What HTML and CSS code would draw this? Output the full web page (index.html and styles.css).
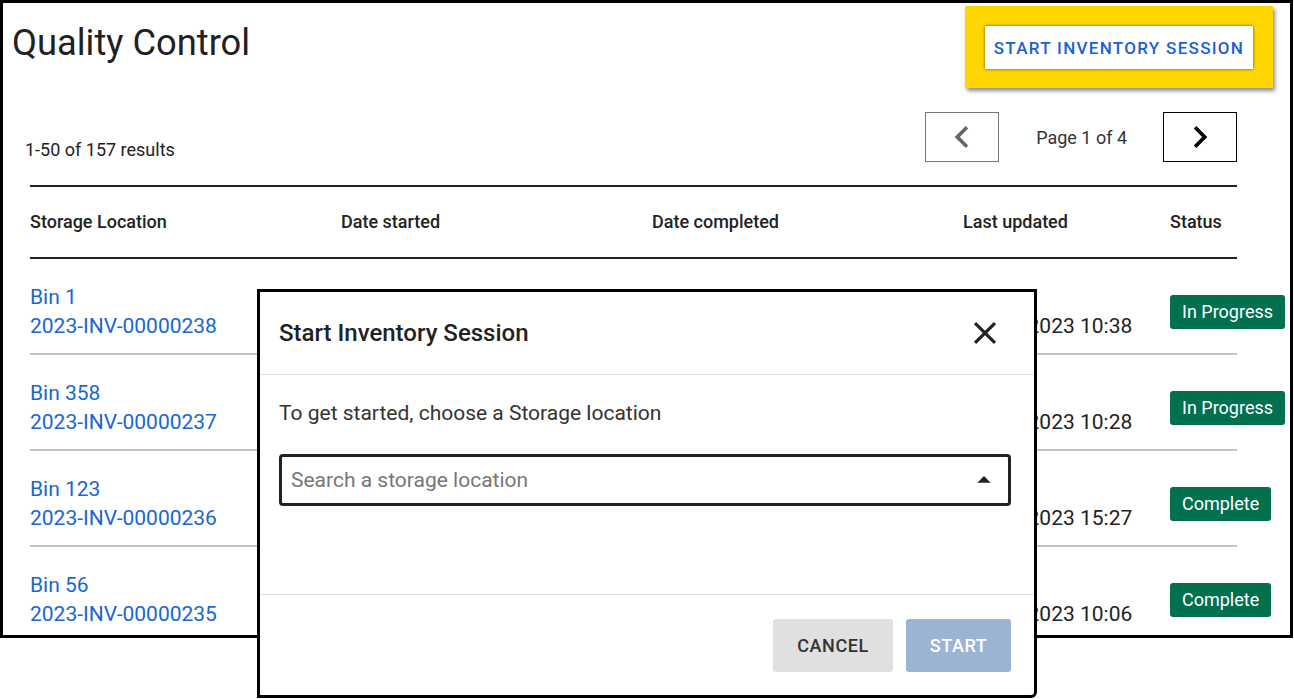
FILE: index.html
```html
<!DOCTYPE html>
<html lang="en">
<head>
    <meta charset="UTF-8">
    <title>Quality Control</title>
    <link rel="stylesheet" href="styles.css">
</head>
<body>
    <div class="frame">
        <div class="top">
            <h1 class="page-title">Quality Control</h1>
            <div class="highlight">
                <button class="start-session">START INVENTORY SESSION</button>
            </div>
        </div>

        <div class="pager-row">
            <span class="results">1-50 of 157 results</span>
            <div class="pager">
                <button class="page-btn prev" aria-label="Previous page">
                    <svg width="44" height="44" viewBox="0 0 24 24"><path d="M15.41 7.41L14 6l-6 6 6 6 1.41-1.41L10.83 12z" fill="#666"/></svg>
                </button>
                <span class="page-label">Page 1 of 4</span>
                <button class="page-btn next" aria-label="Next page">
                    <svg width="44" height="44" viewBox="0 0 24 24"><path d="M8.59 16.59L10 18l6-6-6-6-1.41 1.41L13.17 12z" fill="#000"/></svg>
                </button>
            </div>
        </div>

        <div class="table">
            <div class="thead">
                <div>Storage Location</div>
                <div>Date started</div>
                <div>Date completed</div>
                <div>Last updated</div>
                <div>Status</div>
            </div>
            <!-- started / completed cells are covered by the dialog -->
            <div class="trow">
                <div class="loc"><a href="#">Bin 1</a><a href="#">2023-INV-00000238</a></div>
                <div class="date"></div>
                <div class="date"></div>
                <div class="date">04/21/2023 10:38</div>
                <div class="status"><span class="badge">In Progress</span></div>
            </div>
            <div class="trow">
                <div class="loc"><a href="#">Bin 358</a><a href="#">2023-INV-00000237</a></div>
                <div class="date"></div>
                <div class="date"></div>
                <div class="date">04/21/2023 10:28</div>
                <div class="status"><span class="badge">In Progress</span></div>
            </div>
            <div class="trow">
                <div class="loc"><a href="#">Bin 123</a><a href="#">2023-INV-00000236</a></div>
                <div class="date"></div>
                <div class="date"></div>
                <div class="date">04/20/2023 15:27</div>
                <div class="status"><span class="badge">Complete</span></div>
            </div>
            <div class="trow">
                <div class="loc"><a href="#">Bin 56</a><a href="#">2023-INV-00000235</a></div>
                <div class="date"></div>
                <div class="date"></div>
                <div class="date">04/19/2023 10:06</div>
                <div class="status"><span class="badge">Complete</span></div>
            </div>
        </div>
    </div>

    <div class="modal">
        <div class="modal-head">
            <h2>Start Inventory Session</h2>
            <button class="close" aria-label="Close">
                <svg width="38" height="38" viewBox="0 0 24 24"><path d="M19 6.41L17.59 5 12 10.59 6.41 5 5 6.41 10.59 12 5 17.59 6.41 19 12 13.41 17.59 19 19 17.59 13.41 12z" fill="#222"/></svg>
            </button>
        </div>
        <div class="modal-body">
            <p>To get started, choose a Storage location</p>
            <div class="select">
                <span class="placeholder">Search a storage location</span>
                <svg width="32" height="32" viewBox="0 0 24 24"><path d="M7 14l5-5 5 5z" fill="#222"/></svg>
            </div>
        </div>
        <div class="modal-foot">
            <button class="btn cancel">CANCEL</button>
            <button class="btn start" disabled>START</button>
        </div>
    </div>
</body>
</html>
```

FILE: styles.css
```css
body {
    margin: 0;
    background: #fff;
    font-family: Roboto, "Liberation Sans", sans-serif;
    color: #222;
    width: 1294px;
    height: 699px;
    overflow: hidden;
}
button {
    font-family: inherit;
    border: none;
    background: none;
    padding: 0;
    cursor: pointer;
}
.frame {
    width: 1293px;
    height: 638px;
    border: 3px solid #000;
    box-sizing: border-box;
    overflow: hidden;
}
.top {
    display: flex;
    justify-content: space-between;
    align-items: flex-start;
    padding: 3px 17px 0 9px;
}
.page-title {
    margin: 16px 0 0;
    font-size: 36.3px;
    font-weight: 400;
    line-height: 42px;
    color: #212121;
}
.highlight {
    background: #ffd600;
    padding: 20px 20px 19px 20px;
    box-shadow: 2px 3px 4px rgba(0, 0, 0, 0.45);
}
.start-session {
    display: block;
    width: 268px;
    height: 43px;
    padding-top: 1px;
    background: #fff;
    color: #1a5fd6;
    font-size: 17px;
    font-weight: 500;
    letter-spacing: 1.3px;
    box-shadow: 0 0 3px rgba(0, 0, 0, 0.6);
}
.pager-row {
    display: flex;
    justify-content: space-between;
    align-items: flex-end;
    margin: 24px 53px 0 22px;
}
.results {
    font-size: 18px;
    line-height: 21px;
    color: #222;
    margin-bottom: 2px;
}
.pager {
    display: flex;
    align-items: center;
}
.page-btn {
    width: 74px;
    height: 50px;
    display: flex;
    align-items: center;
    justify-content: center;
    box-sizing: border-box;
}
.page-btn.prev {
    border: 1px solid #777;
}
.page-btn.next {
    border: 1.5px solid #000;
}
.page-label {
    margin: 0 36px 0 37px;
    font-size: 18px;
    color: #333;
}
.table {
    width: 1207px;
    margin: 23px 0 0 27px;
}
.thead,
.trow {
    display: grid;
    grid-template-columns: 311px 311px 311px 207px 67px;
}
.thead {
    height: 74px;
    box-sizing: border-box;
    padding-bottom: 1px;
    align-items: center;
    border-top: 2px solid #222;
    border-bottom: 2px solid #222;
    font-size: 18px;
    font-weight: 500;
    color: #222;
}
.trow {
    height: 96px;
    box-sizing: border-box;
    padding: 24px 0 12px;
    border-bottom: 2px solid #c4c4c4;
    font-size: 21px;
    line-height: 29px;
}
.loc {
    display: flex;
    flex-direction: column;
}
.loc a {
    color: #1967d2;
    text-decoration: none;
}
.date {
    align-self: end;
    color: #222;
    white-space: nowrap;
}
.status {
    align-self: center;
}
.badge {
    display: inline-block;
    background: #00704f;
    color: #fff;
    font-size: 18px;
    line-height: 34px;
    padding: 0 12px;
    border-radius: 3px;
    white-space: nowrap;
}

/* dialog sits over the list */
.modal {
    position: absolute;
    left: 257px;
    top: 289px;
    width: 780px;
    height: 409px;
    box-sizing: border-box;
    border: 3px solid #000;
    border-bottom-right-radius: 6px;
    background: #fff;
    display: flex;
    flex-direction: column;
}
.modal-head {
    height: 82px;
    display: flex;
    align-items: center;
    justify-content: space-between;
    padding: 0 30px 0 19px;
    border-bottom: 1px solid #e0e0e0;
}
.modal-head h2 {
    margin: 0;
    font-size: 24px;
    font-weight: 500;
    color: #222;
}
.close {
    display: flex;
}
.modal-body {
    height: 219px;
    padding: 0 23px 0 19px;
    border-bottom: 1px solid #e0e0e0;
}
.modal-body p {
    margin: 26px 0 0;
    font-size: 21px;
    line-height: 24px;
    color: #333;
}
.select {
    margin-top: 29px;
    height: 52px;
    box-sizing: border-box;
    border: 3px solid #222;
    border-radius: 4px;
    display: flex;
    align-items: center;
    justify-content: space-between;
    padding: 0 8px 0 9px;
}
.placeholder {
    font-size: 21px;
    color: #777;
}
.modal-foot {
    flex: 1;
    display: flex;
    justify-content: flex-end;
    align-items: flex-start;
    gap: 13px;
    padding: 24px 23px 0 0;
}
.btn {
    height: 53px;
    border-radius: 3px;
    font-size: 18px;
    font-weight: 500;
    letter-spacing: 0.6px;
}
.btn.cancel {
    width: 120px;
    background: #e0e0e0;
    color: #333;
}
.btn.start {
    width: 105px;
    background: #9bb4d4;
    color: #fff;
}
```
